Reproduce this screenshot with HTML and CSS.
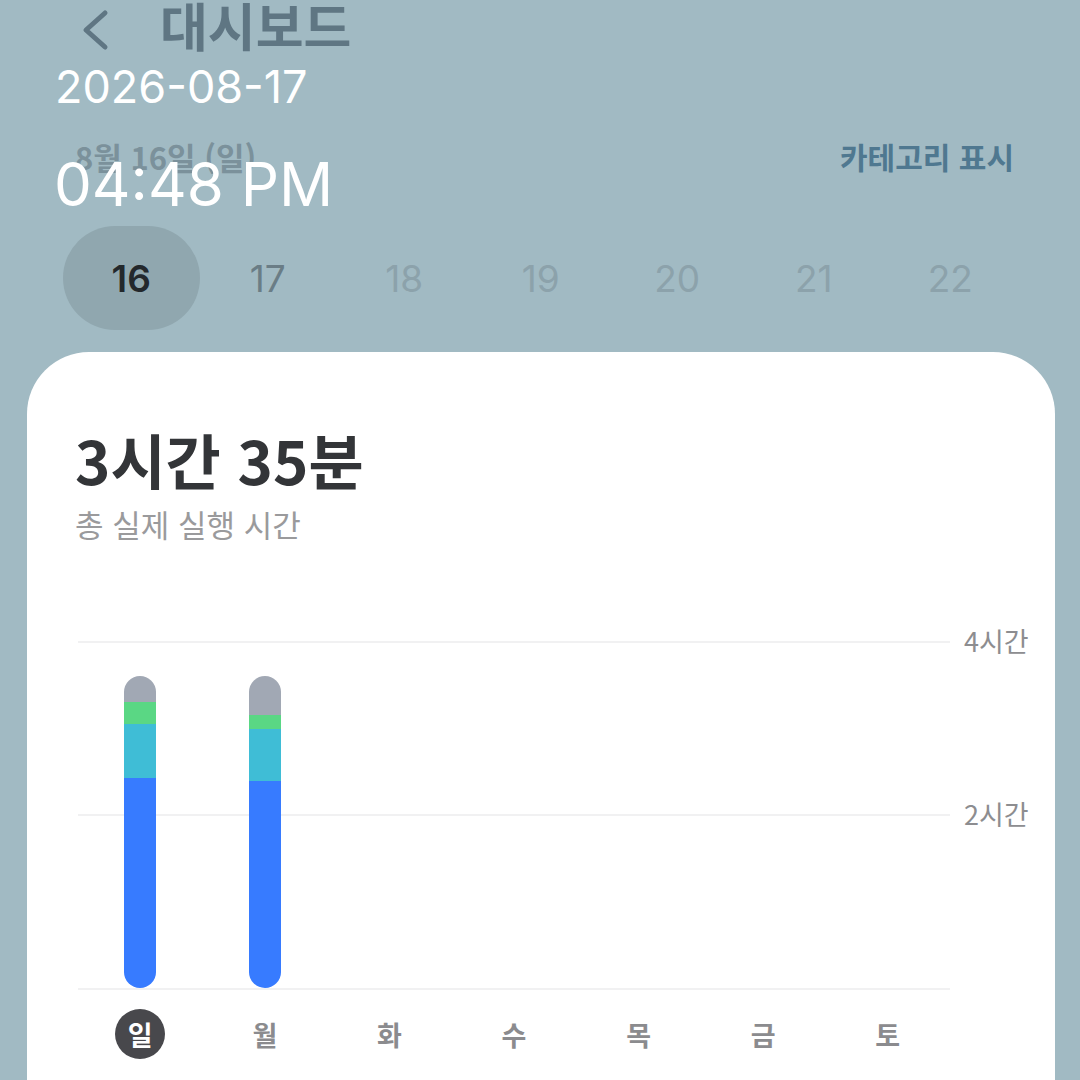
FILE: index.html
```html
<!DOCTYPE html>
<html lang="ko">
<head>
    <meta charset="UTF-8">
    <meta name="viewport" content="width=device-width, initial-scale=1.0">
    <title>대시보드</title>
<link rel="stylesheet" href="styles.css">
</head>
<body>

  <div class="topbar">
    <svg class="back" width="32" height="42" viewBox="0 0 32 42">
      <path d="M27 4 L8 21 L27 38" fill="none" stroke="#5f7683" stroke-width="5" stroke-linecap="round" stroke-linejoin="round"/>
    </svg>
    <h1>대시보드</h1>
  </div>

  <div class="daterow">
    <span class="today">8월 16일 (일)</span>
    <span class="toggle">카테고리 표시</span>
  </div>

  <div class="days">
    <div class="day active">16</div>
    <div class="day near">17</div>
    <div class="day">18</div>
    <div class="day">19</div>
    <div class="day">20</div>
    <div class="day">21</div>
    <div class="day">22</div>
  </div>

  <div class="card">
    <div class="total">3시간 35분</div>
    <div class="total-label">총 실제 실행 시간</div>

    <div class="chart">
      <div class="plot">
        <div class="gridline" style="top:0"><span>4시간</span></div>
        <div class="gridline" style="top:173px"><span>2시간</span></div>
        <div class="gridline" style="top:347px"></div>

        <div class="col">
          <div class="bar">
            <div class="seg gray" style="height:26px"></div>
            <div class="seg green" style="height:22px"></div>
            <div class="seg teal" style="height:54px"></div>
            <div class="seg blue" style="height:210px"></div>
          </div>
        </div>
        <div class="col">
          <div class="bar">
            <div class="seg gray" style="height:39px"></div>
            <div class="seg green" style="height:14px"></div>
            <div class="seg teal" style="height:52px"></div>
            <div class="seg blue" style="height:207px"></div>
          </div>
        </div>
        <div class="col"></div>
        <div class="col"></div>
        <div class="col"></div>
        <div class="col"></div>
        <div class="col"></div>
      </div>

      <div class="weekdays">
        <div class="wd"><span class="wd-on">일</span></div>
        <div class="wd">월</div>
        <div class="wd">화</div>
        <div class="wd">수</div>
        <div class="wd">목</div>
        <div class="wd">금</div>
        <div class="wd">토</div>
      </div>
    </div>
  </div>

  <div class="stamp-date">2026-08-17</div>
  <div class="stamp-time">04:48 PM</div>

</body>
</html>
```

FILE: styles.css
```css
body {
  margin: 0;
  padding: 0;
  width: 1080px;
  height: 1080px;
  overflow: hidden;
  background-color: #a1bac3;
  font-family: "Noto Sans CJK KR", "Noto Sans", sans-serif;
  position: relative;
}

.topbar{
    display: flex;
    align-items: center;
    height: 54px;
    padding-left: 76px;
    margin-top: -2px;
}

.back{
    margin: 10px 50px 0 2px;
}

.topbar h1{
    margin: 0;
    font-size: 52px;
    line-height: 1;
    font-weight: 700;
    color: #5f7683;
}

.daterow{
    display: flex;
    justify-content: space-between;
    align-items: center;
    height: 40px;
    margin-top: 84px;
    padding: 0 66px 0 75px;
}

.today{
    font-size: 31px;
    font-weight: 700;
    color: #7b919b;
}

.toggle{
    font-size: 30px;
    font-weight: 700;
    color: #4f7890;
}

.days{
    display: flex;
    margin-top: 50px;
    padding-left: 63px;
}

.day{
    width: 136.5px;
    height: 104px;
    border-radius: 52px;
    display: flex;
    align-items: center;
    justify-content: center;
    font-family: Inter, sans-serif;
    font-size: 37px;
    color: #8ca2ab;
}

.day.near{
    color: #6a7d86;
}

.day.active{
    background-color: #90a7af;
    color: #23282c;
    font-weight: 600;
}

.card{
    margin: 22px 25px 0 27px;
    height: 800px;
    background-color: #fff;
    border-radius: 62px 62px 0 0;
    padding: 71px 0 0 48px;
}

.total{
    font-size: 60px;
    font-weight: 700;
    line-height: 1.2;
    color: #333538;
}

.total-label{
    margin-top: 6px;
    font-size: 31px;
    color: #9a9a9c;
}

.chart{
    margin-top: 95px;
    margin-left: 3px;
}

.plot{
    position: relative;
    width: 872px;
    height: 347px;
    display: flex;
    align-items: flex-end;
}

.gridline{
    position: absolute;
    left: 0;
    width: 872px;
    height: 2px;
    background-color: #f1f1f2;
}

.gridline span{
    position: absolute;
    left: 886px;
    top: -20px;
    font-size: 27px;
    color: #8d8d90;
    white-space: nowrap;
}

.col{
    position: relative;
    flex: 1;
    display: flex;
    justify-content: center;
}

.bar{
    width: 32px;
    border-radius: 16px;
    overflow: hidden;
    display: flex;
    flex-direction: column;
}

.seg.gray{ background-color: #a1a8b4; }
.seg.green{ background-color: #5ad784; }
.seg.teal{ background-color: #3fbdd6; }
.seg.blue{ background-color: #377bff; }

.weekdays{
    display: flex;
    width: 872px;
    margin-top: 20px;
}

.wd{
    flex: 1;
    height: 52px;
    display: flex;
    align-items: center;
    justify-content: center;
    font-size: 27px;
    font-weight: 700;
    color: #8b8b8e;
}

.wd-on{
    width: 50px;
    height: 50px;
    border-radius: 50%;
    background-color: #48484c;
    color: #fff;
    display: flex;
    align-items: center;
    justify-content: center;
}

.stamp-date{
    position: absolute;
    left: 55px;
    top: 64px;
    font-family: Inter, sans-serif;
    font-size: 45px;
    line-height: 1;
    color: #fff;
}

.stamp-time{
    position: absolute;
    left: 54px;
    top: 154px;
    font-family: Inter, sans-serif;
    font-size: 60px;
    line-height: 1;
    color: #fff;
}
```
